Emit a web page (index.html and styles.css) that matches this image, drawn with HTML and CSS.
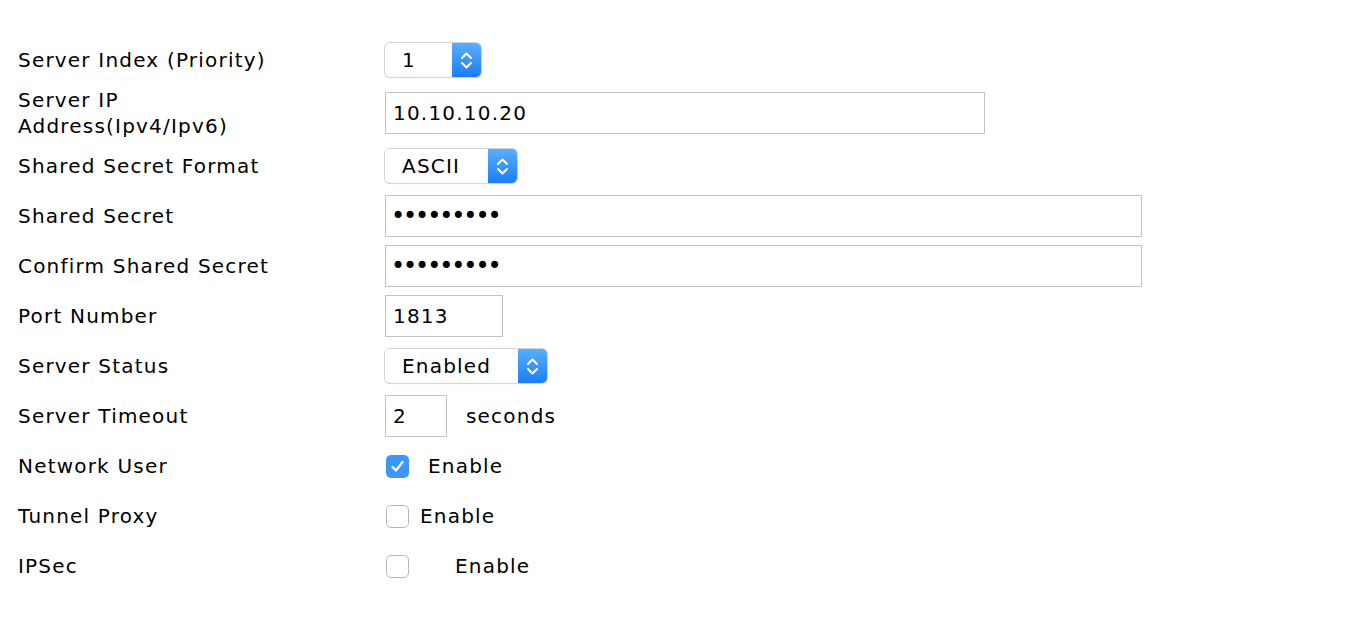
FILE: index.html
```html
<!DOCTYPE html>
<html>
<head>
<meta charset="utf-8">
<link rel="stylesheet" href="styles.css">
</head>
<body>
<div class="form">
  <div class="row"><div class="label">Server Index (Priority)</div>
    <div class="ctrl"><div class="select w96"><span class="val">1</span><span class="btn"><svg viewBox="0 0 29 33" width="29" height="33"><path d="M10 14 L14.5 9.5 L19 14 M10 19 L14.5 23.5 L19 19" fill="none" stroke="#fff" stroke-width="2" stroke-linecap="round" stroke-linejoin="round"/></svg></span></div></div></div>
  <div class="row tall"><div class="label">Server IP<br>Address(Ipv4/Ipv6)</div>
    <div class="ctrl"><div class="input w600">10.10.10.20</div></div></div>
  <div class="row"><div class="label">Shared Secret Format</div>
    <div class="ctrl"><div class="select w132"><span class="val">ASCII</span><span class="btn"><svg viewBox="0 0 29 33" width="29" height="33"><path d="M10 14 L14.5 9.5 L19 14 M10 19 L14.5 23.5 L19 19" fill="none" stroke="#fff" stroke-width="2" stroke-linecap="round" stroke-linejoin="round"/></svg></span></div></div></div>
  <div class="row"><div class="label">Shared Secret</div>
    <div class="ctrl"><div class="input w757 pw">•••••••••</div></div></div>
  <div class="row"><div class="label">Confirm Shared Secret</div>
    <div class="ctrl"><div class="input w757 pw">•••••••••</div></div></div>
  <div class="row"><div class="label">Port Number</div>
    <div class="ctrl"><div class="input w118">1813</div></div></div>
  <div class="row"><div class="label">Server Status</div>
    <div class="ctrl"><div class="select w162"><span class="val">Enabled</span><span class="btn"><svg viewBox="0 0 29 33" width="29" height="33"><path d="M10 14 L14.5 9.5 L19 14 M10 19 L14.5 23.5 L19 19" fill="none" stroke="#fff" stroke-width="2" stroke-linecap="round" stroke-linejoin="round"/></svg></span></div></div></div>
  <div class="row"><div class="label">Server Timeout</div>
    <div class="ctrl"><div class="input w62">2</div><span class="after">seconds</span></div></div>
  <div class="row"><div class="label">Network User</div>
    <div class="ctrl"><span class="check on"><svg viewBox="0 0 23 23" width="23" height="23"><path d="M6.5 12 L10 15.5 L16.5 7" fill="none" stroke="#fff" stroke-width="2.2" stroke-linecap="round" stroke-linejoin="round"/></svg></span><span class="cl cl1">Enable</span></div></div>
  <div class="row"><div class="label">Tunnel Proxy</div>
    <div class="ctrl"><span class="check"></span><span class="cl cl2">Enable</span></div></div>
  <div class="row"><div class="label">IPSec</div>
    <div class="ctrl"><span class="check"></span><span class="cl cl3">Enable</span></div></div>
</div>
</body>
</html>
```
FILE: styles.css
```css
html, body { margin: 0; padding: 0; background: #fff; }
body { font-family: "DejaVu Sans", Verdana, sans-serif; font-size: 20px; letter-spacing: 1.2px; color: #000; }
.form { padding: 35px 0 0 18px; display: flex; flex-direction: column; }
.row { display: grid; grid-template-columns: 367px 1fr; height: 50px; align-items: center; }
.row.tall { height: 56px; }
.label { line-height: 26px; }
.ctrl { display: flex; align-items: center; }
.input { box-sizing: border-box; height: 42px; border: 1px solid #c3c3c3; padding: 0 7px; display: flex; align-items: center; background: #fff; }
.w600 { width: 600px; }
.w757 { width: 757px; }
.w118 { width: 118px; }
.w62 { width: 62px; }
.pw { font-size: 24px; letter-spacing: -2.1px; padding-left: 5px; }
.after { margin-left: 19px; }
.select { box-sizing: border-box; height: 34px; display: flex; border-radius: 5px; box-shadow: 0 0 0 1px #d4d4d4, 0 1px 1px rgba(0,0,0,0.18); background: #fff; overflow: hidden; }
.w96 { width: 96px; }
.w132 { width: 132px; }
.w162 { width: 162px; }
.val { flex: 1; padding-left: 17px; display: flex; align-items: center; }
.btn { width: 29px; background: linear-gradient(#5aaefc, #1b7ef7); display: flex; align-items: center; justify-content: center; }
.btn svg { display: block; }
.check { box-sizing: border-box; width: 23px; height: 23px; border: 1px solid #b7b7b7; border-radius: 5px; background: #fff; margin-left: 1px; display: inline-block; }
.check.on { border: none; background: #3d96f8; }
.check svg { display: block; }
.cl1 { margin-left: 19px; }
.cl2 { margin-left: 11px; }
.cl3 { margin-left: 46px; }
```
